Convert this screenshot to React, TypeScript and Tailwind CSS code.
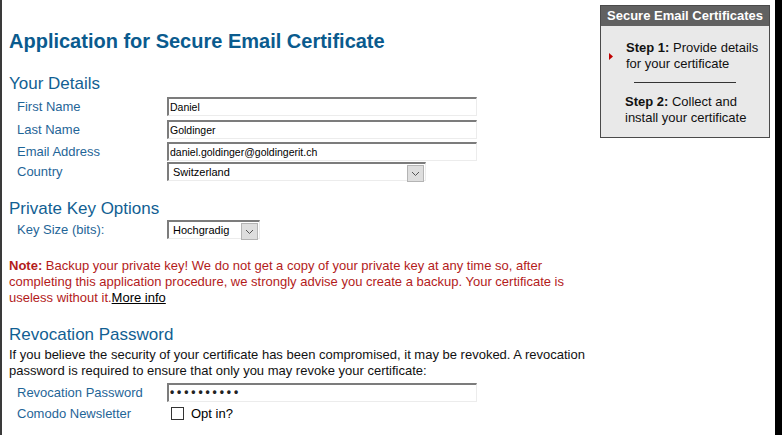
import React from "react";

const Arrow = () => (
  <div className="w-[17px] h-[17px] mt-[1px] mr-[1px] bg-[#dedede] border border-[#b4b4b4] flex items-center justify-center">
    <svg width="9" height="6" viewBox="0 0 9 6">
      <polyline points="1,1 4.5,4.5 8,1" fill="none" stroke="#555" strokeWidth="1" />
    </svg>
  </div>
);

const inputCls =
  "h-[19px] border-t-2 border-l-2 border-r border-b border-t-[#7c7c7c] border-l-[#7c7c7c] border-r-[#ececec] border-b-[#ececec] bg-white";

function Row({ label, children, mt }: { label: string; children: React.ReactNode; mt: string }) {
  return (
    <div className={`flex items-center ${mt}`}>
      <div className="w-[158px] pl-[8px] text-[13px] leading-[16px] text-[#1f6597]">{label}</div>
      {children}
    </div>
  );
}

function TextBox({ value }: { value: string }) {
  return (
    <div className={`${inputCls} w-[310px] pl-[1px] text-[10.5px] leading-[16px] text-black`}>{value}</div>
  );
}

function Select({ value, width }: { value: string; width: string }) {
  return (
    <div className={`${inputCls} ${width} flex justify-between`}>
      <span className="pl-[4px] text-[11px] leading-[16px] text-black">{value}</span>
      <Arrow />
    </div>
  );
}

export default function App() {
  return (
    <div className="flex w-[782px] h-[435px] bg-white border-l-2 border-[#3a3a3a] font-['Liberation_Sans',Arial,sans-serif] overflow-hidden">
      <main className="w-[593px] shrink-0 pl-[7px] pt-[29px]">
        <h1 className="text-[20px] leading-[24px] font-bold text-[#0a5b8e]">
          Application for Secure Email Certificate
        </h1>
        <h2 className="mt-[21px] text-[17px] leading-[20px] text-[#125f93]">Your Details</h2>
        <Row label="First Name" mt="mt-[3px]">
          <TextBox value="Daniel" />
        </Row>
        <Row label="Last Name" mt="mt-[4px]">
          <TextBox value="Goldinger" />
        </Row>
        <Row label="Email Address" mt="mt-[3px]">
          <TextBox value="daniel.goldinger@goldingerit.ch" />
        </Row>
        <Row label="Country" mt="mt-[1px]">
          <Select value="Switzerland" width="w-[259px]" />
        </Row>

        <h2 className="mt-[18px] text-[17px] leading-[20px] text-[#125f93]">Private Key Options</h2>
        <Row label="Key Size (bits):" mt="mt-[1px]">
          <Select value="Hochgradig" width="w-[93px]" />
        </Row>

        <p className="mt-[19px] text-[13px] leading-[16px] text-[#b31b1b]">
          <b>Note:</b> Backup your private key! We do not get a copy of your private key at any time so, after
          completing this application procedure, we strongly advise you create a backup. Your certificate is
          useless without it.<a className="text-black underline">More info</a>
        </p>

        <h2 className="mt-[19px] text-[17px] leading-[20px] text-[#125f93]">Revocation Password</h2>
        <p className="mt-[2px] text-[13px] leading-[16px] text-[#111]">
          If you believe the security of your certificate has been compromised, it may be revoked. A revocation
          password is required to ensure that only you may revoke your certificate:
        </p>
        <Row label="Revocation Password" mt="mt-[4px]">
          <div className={`${inputCls} w-[310px] pl-[1px] text-[12px] leading-[15px] tracking-[2.9px] text-[#222] font-bold`}>
            ••••••••••
          </div>
        </Row>
        <Row label="Comodo Newsletter" mt="mt-[2px]">
          <div className="flex items-center h-[19px]">
            <div className="ml-[4px] w-[13px] h-[13px] border border-[#333] bg-white" />
            <span className="ml-[7px] text-[13px] leading-[16px] text-black">Opt in?</span>
          </div>
        </Row>
      </main>

      <aside className="ml-[5px] mt-[5px] w-[170px] shrink-0 self-start border border-[#4a4a4a] bg-[#e9e9e9]">
        <div className="h-[20px] bg-[#616161] pl-[6px] text-[13px] leading-[20px] font-bold text-white whitespace-nowrap">
          Secure Email Certificates
        </div>
        <div className="pt-[14px] pb-[11px]">
          <div className="flex items-center">
            <svg width="4" height="7" viewBox="0 0 4 7" className="ml-[8px] mt-[1px]">
              <polygon points="0,0 4,3.5 0,7" fill="#c00000" />
            </svg>
            <div className="ml-[13px] text-[13px] leading-[16px] text-[#111]">
              <b>Step 1:</b> Provide details
              <br />
              for your certificate
            </div>
          </div>
          <div className="mx-auto mt-[10px] w-[102px] h-px bg-[#333]" />
          <div className="mt-[11px] pl-[24px] text-[13px] leading-[16px] text-[#111]">
            <b>Step 2:</b> Collect and
            <br />
            install your certificate
          </div>
        </div>
      </aside>

      <div className="ml-[5px] w-[7px] h-full bg-black shrink-0" />
    </div>
  );
}
